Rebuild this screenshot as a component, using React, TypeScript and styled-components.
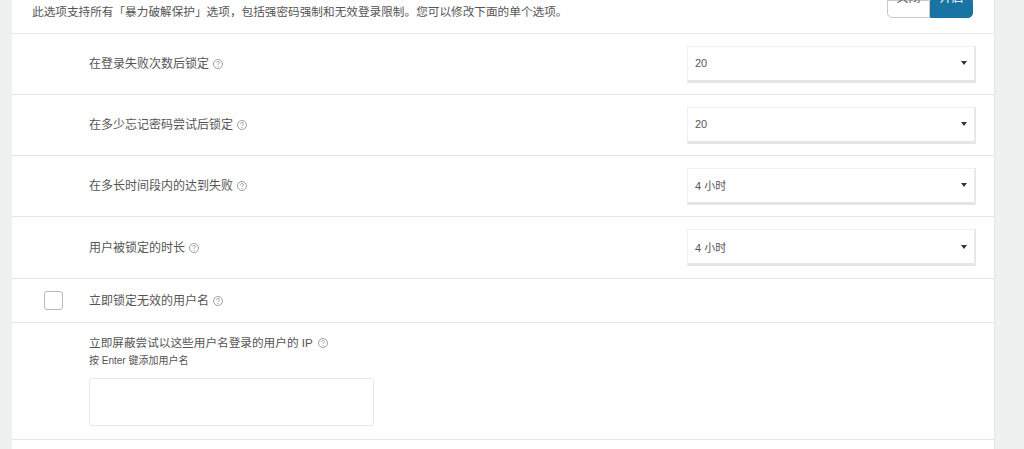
import React from 'react';
import styled, { createGlobalStyle } from 'styled-components';

const Global = createGlobalStyle`
  html, body {
    margin: 0;
    height: 449px;
    overflow: hidden;
    background: #eff0f0;
    font-family: "Liberation Sans", "Noto Sans CJK SC", sans-serif;
    color: #555;
  }
`;

const Card = styled.div`
  margin-left: 12px;
  width: 982px;
  height: 449px;
  background: #fff;
  box-shadow: 1px 0 0 #e6e6e6;
`;

const Header = styled.div`
  height: 34px;
  box-sizing: border-box;
  padding: 0 21px 0 20px;
  display: flex;
  justify-content: space-between;
  border-bottom: 1px solid #e7e7e7;
`;

const Intro = styled.p`
  margin: 4px 0 0;
  font-size: 11.65px;
  line-height: 16px;
  color: #555;
`;

const Toggle = styled.div`
  display: flex;
  height: 18px;
`;

const ToggleButton = styled.div<{ $on?: boolean }>`
  width: 43px;
  box-sizing: border-box;
  padding-bottom: 12px;
  display: flex;
  align-items: flex-end;
  justify-content: center;
  font-size: 12px;
  line-height: 14px;
  color: ${({ $on }) => ($on ? '#fff' : '#555')};
  background: ${({ $on }) => ($on ? '#1a74a3' : '#fff')};
  border: 1px solid ${({ $on }) => ($on ? '#1a74a3' : '#c9c9c9')};
  border-radius: ${({ $on }) => ($on ? '0 0 5px 0' : '0 0 0 5px')};
`;

const SelectRow = styled.div<{ $tall?: boolean }>`
  height: ${({ $tall }) => ($tall ? '62px' : '61px')};
  box-sizing: border-box;
  padding: 0 18px 0 77px;
  display: flex;
  align-items: center;
  justify-content: space-between;
  border-bottom: 1px solid #e4e4e4;
`;

const Label = styled.label<{ $small?: boolean }>`
  display: flex;
  align-items: center;
  gap: ${({ $small }) => ($small ? '5px' : '4px')};
  font-size: ${({ $small }) => ($small ? '11.65px' : '12px')};
  line-height: 16px;
  color: #555;
`;

const FakeSelect = styled.div`
  width: 289px;
  height: 37px;
  box-sizing: border-box;
  padding: 0 7px;
  display: flex;
  align-items: center;
  justify-content: space-between;
  font-size: 11px;
  color: #555;
  background: #fff;
  border-style: solid;
  border-width: 1px 2px 3px 1px;
  border-color: #f0f0f0 #e8e8e8 #e6e6e6 #f0f0f0;
`;

const Caret = styled.span`
  width: 0;
  height: 0;
  border-left: 3px solid transparent;
  border-right: 3px solid transparent;
  border-top: 4px solid #333;
`;

const CheckRow = styled.div`
  height: 44px;
  box-sizing: border-box;
  padding-left: 32px;
  display: flex;
  align-items: center;
  gap: 26px;
  border-bottom: 1px solid #e4e4e4;
`;

const Checkbox = styled.span`
  width: 19px;
  height: 19px;
  box-sizing: border-box;
  border: 1px solid #b9b9b9;
  border-radius: 3px;
  background: #fff;
`;

const BlockRow = styled.div`
  height: 117px;
  box-sizing: border-box;
  padding: 12px 0 0 77px;
  border-bottom: 1px solid #e4e4e4;
`;

const Hint = styled.div`
  margin-top: 3px;
  font-size: 10px;
  line-height: 14px;
  color: #555;
`;

const TextBox = styled.div`
  margin-top: 10px;
  width: 285px;
  height: 48px;
  box-sizing: border-box;
  border: 1px solid #e8e8e8;
  border-radius: 3px;
`;

const Help = () => (
  <svg width="10" height="10" viewBox="0 0 10 10" fill="none">
    <circle cx="5" cy="5" r="4.5" stroke="#949494" strokeWidth="0.9" />
    <path d="M3.5 4c0-.9.6-1.5 1.5-1.5s1.5.5 1.5 1.3c0 1-1.5 1-1.5 2" stroke="#949494" strokeWidth="0.9" />
    <circle cx="5" cy="7.5" r="0.55" fill="#949494" />
  </svg>
);

const selects = [
  { label: '在登录失败次数后锁定', value: '20' },
  { label: '在多少忘记密码尝试后锁定', value: '20' },
  { label: '在多长时间段内的达到失败', value: '4 小时' },
  { label: '用户被锁定的时长', value: '4 小时', tall: true },
];

export default function App() {
  return (
    <>
      <Global />
      <Card>
        <Header>
          <Intro>此选项支持所有「暴力破解保护」选项，包括强密码强制和无效登录限制。您可以修改下面的单个选项。</Intro>
          <Toggle>
            <ToggleButton>关闭</ToggleButton>
            <ToggleButton $on>开启</ToggleButton>
          </Toggle>
        </Header>
        {selects.map((s) => (
          <SelectRow key={s.label} $tall={s.tall}>
            <Label>{s.label} <Help /></Label>
            <FakeSelect>{s.value}<Caret /></FakeSelect>
          </SelectRow>
        ))}
        <CheckRow>
          <Checkbox />
          <Label>立即锁定无效的用户名 <Help /></Label>
        </CheckRow>
        <BlockRow>
          <Label $small>立即屏蔽尝试以这些用户名登录的用户的 IP <Help /></Label>
          <Hint>按 Enter 键添加用户名</Hint>
          <TextBox />
        </BlockRow>
      </Card>
    </>
  );
}
